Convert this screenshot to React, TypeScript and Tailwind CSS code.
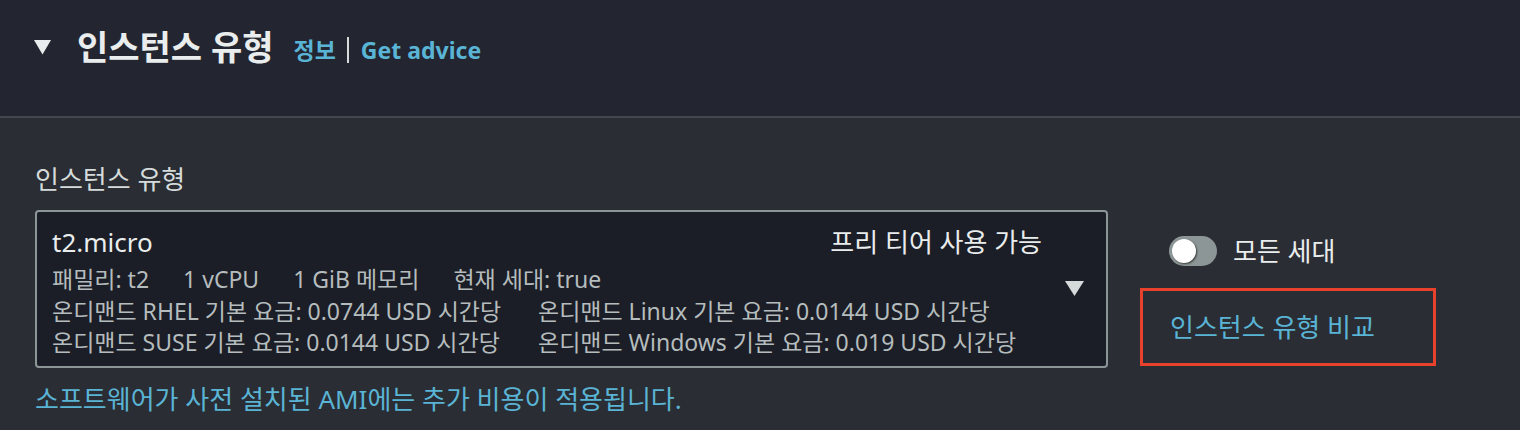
import React from "react";

const font = { fontFamily: '"Noto Sans", "Noto Sans CJK KR", sans-serif' };

export default function App() {
  return (
    <div className="w-[1520px] h-[430px] bg-[#2a2d33] overflow-hidden" style={font}>
      <div className="h-[118px] bg-[#232630] border-b-2 border-[#414750] flex items-center pl-[34px] pb-[22px]">
        <svg width="17" height="15" viewBox="0 0 17 15" className="mr-[26px]">
          <polygon points="0,0 17,0 8.5,14.5" fill="#eaeded" />
        </svg>
        <span className="text-[34px] font-bold text-[#eaeded] leading-none">인스턴스 유형</span>
        <span className="ml-[20px] text-[23px] font-bold text-[#5ab4d5] leading-none mt-[6px]">정보</span>
        <span className="ml-[11px] mr-[12px] w-[2px] h-[26px] bg-[#d5dbdb] mt-[6px]"></span>
        <span className="text-[23px] font-bold text-[#5ab4d5] leading-none mt-[6px]">Get advice</span>
      </div>
      <div className="pl-[35px] pt-[43px]">
        <div className="text-[26px] text-[#d5dbdb] leading-[36px]">인스턴스 유형</div>
        <div className="flex items-start mt-[13px]">
          <div className="w-[1073px] h-[158px] shrink-0 bg-[#1b1e26] border-2 border-[#8d9696] rounded-[4px] pl-[15px] pr-[22px] pt-[12px] flex flex-col">
            <div className="flex justify-between">
              <div className="text-[26px] text-[#eaeded] leading-[36px]">t2.micro</div>
              <div className="text-[26px] text-[#eaeded] leading-[36px] mr-[42px] whitespace-nowrap">프리 티어 사용 가능</div>
            </div>
            <div className="flex justify-between mt-[4px]">
              <div className="text-[23px] text-[#b5bcbd] leading-[31.5px]">
                <div className="flex gap-[34px]">
                  <span>패밀리: t2</span>
                  <span>1 vCPU</span>
                  <span>1 GiB 메모리</span>
                  <span>현재 세대: true</span>
                </div>
                <div className="flex">
                  <span className="w-[486px] whitespace-nowrap">온디맨드 RHEL 기본 요금: 0.0744 USD 시간당</span>
                  <span className="whitespace-nowrap">온디맨드 Linux 기본 요금: 0.0144 USD 시간당</span>
                </div>
                <div className="flex">
                  <span className="w-[486px] whitespace-nowrap">온디맨드 SUSE 기본 요금: 0.0144 USD 시간당</span>
                  <span className="whitespace-nowrap">온디맨드 Windows 기본 요금: 0.019 USD 시간당</span>
                </div>
              </div>
              <svg width="19" height="16" viewBox="0 0 19 16" className="mt-[17px] shrink-0">
                <polygon points="0,0 19,0 9.5,15" fill="#d5dbdb" />
              </svg>
            </div>
          </div>
          <div className="ml-[32px] flex flex-col">
            <div className="flex items-center ml-[29px] mt-[23px]">
              <div className="relative w-[48px] h-[30px] rounded-full bg-[#8d9696]">
                <div className="absolute left-[3px] top-[3px] w-[24px] h-[24px] rounded-full bg-white shadow-[1px_1px_2px_rgba(0,0,0,0.6)]"></div>
              </div>
              <span className="ml-[16px] text-[26px] text-[#eaeded] leading-[36px]">모든 세대</span>
            </div>
            <div className="mt-[19px] w-[296px] h-[78px] border-[3px] border-[#e8412c] flex items-center pl-[27px]">
              <span className="text-[26px] text-[#5ab4d5] leading-[36px]">인스턴스 유형 비교</span>
            </div>
          </div>
        </div>
        <div className="text-[26px] text-[#5ab4d5] leading-[36px] mt-[13px]">
          소프트웨어가 사전 설치된 AMI에는 추가 비용이 적용됩니다.
        </div>
      </div>
    </div>
  );
}
